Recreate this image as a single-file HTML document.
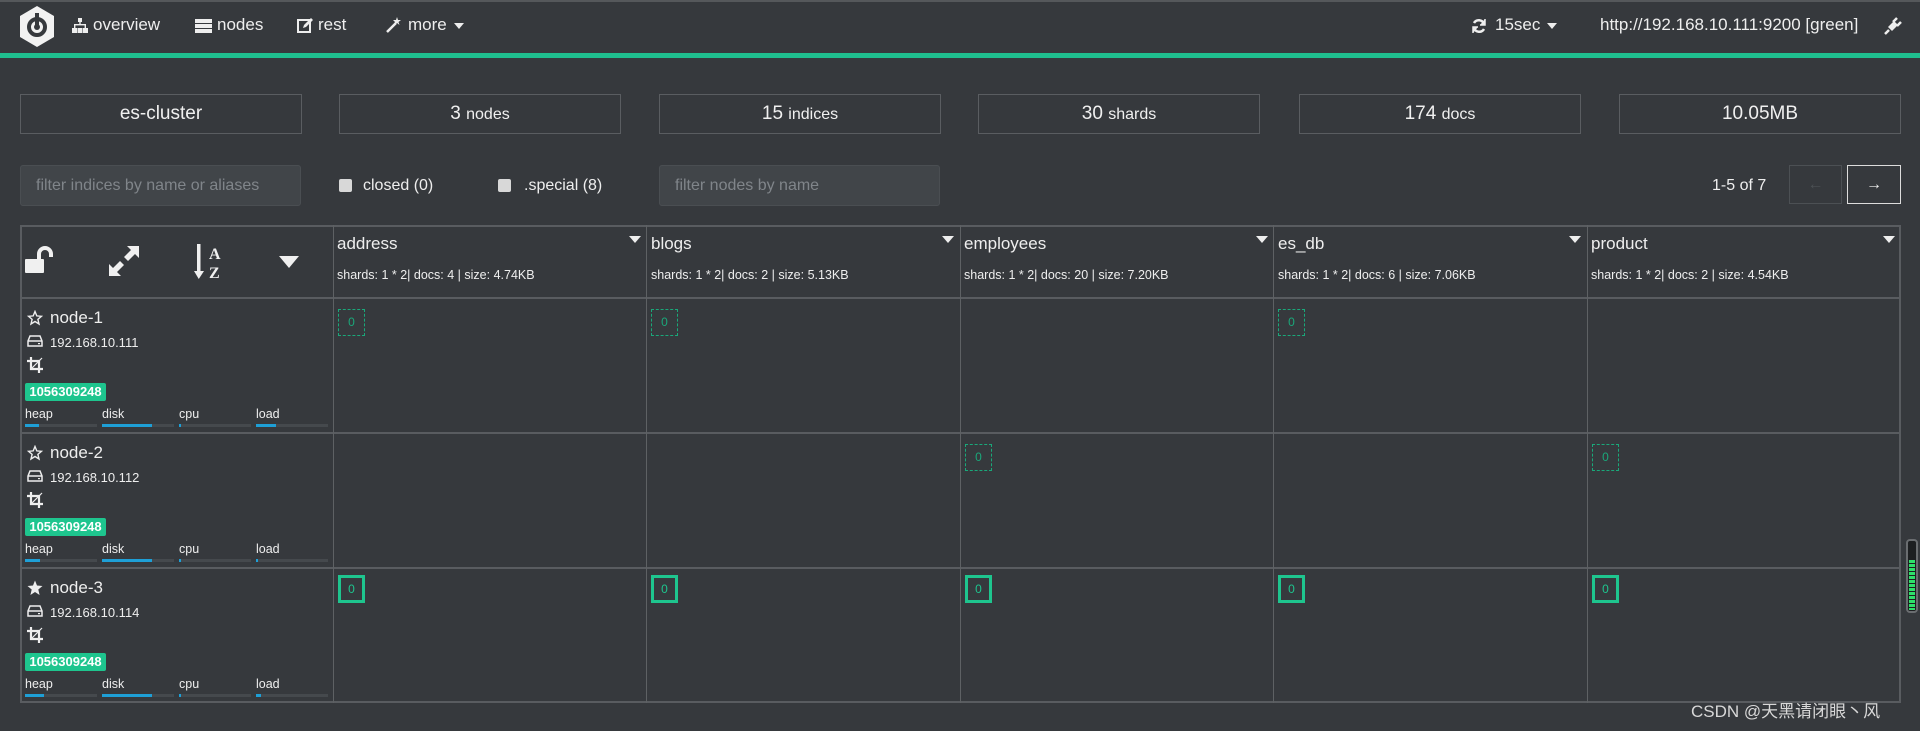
<!DOCTYPE html>
<html><head><meta charset="utf-8"><style>
*{box-sizing:border-box;margin:0;padding:0}
body{width:1920px;height:731px;background:#36393d;font-family:"Liberation Sans",Arial,sans-serif;color:#e8e8e8;position:relative;overflow:hidden}
.a{position:absolute}
.nav{top:0;left:0;width:1920px;height:53px;border-top:2px solid #55585b}
.ni{font-size:17px;color:#eee;top:15px;white-space:nowrap}
.green{top:53px;left:0;width:1920px;height:5px;background:#1fbf8f}
.stat{top:94px;height:40px;width:282px;border:1px solid #5a5d61;text-align:center;font-size:19px;line-height:38px;color:#f0f0f0}
.stat small{font-size:16px}
.inp{top:165px;height:41px;width:281px;background:#414549;border:1px solid #4a4e52;border-radius:3px;color:#80858a;font-size:16px;line-height:39px;padding-left:15px}
.cb{width:13px;height:13px;background:#d8d8d8;border-radius:2px;top:179px}
.lbl{font-size:16px;top:177px;color:#eee}
.vl{width:1px;background:#5e6164;top:225px;height:478px}
.hl{height:2px;background:#595c60;left:20px;width:1881px}
.iname{font-size:17px;color:#eee;top:234px}
.imeta{font-size:12.5px;color:#eee;top:268px;white-space:nowrap}
.car{width:0;height:0;border-left:6px solid transparent;border-right:6px solid transparent;border-top:7px solid #eee;top:236px}
.nn{font-size:17px;color:#eee}
.ip{font-size:13px;color:#eee}
.badge{background:#1ec58e;color:#fff;font-weight:bold;font-size:13px;width:81px;height:18px;line-height:18px;text-align:center;border-radius:2px}
.bl{font-size:12.5px;color:#eee}
.tr{height:3px;width:72px;background:#45494d}
.fl{height:3px;background:#1e9fd6;left:0;top:0;position:absolute}
.sh{width:27px;height:27px;border:1px dashed #1aa87a;color:#1aa87a;font-size:12px;text-align:center;line-height:25px}
.sp{width:27px;height:28px;border:3px solid #1ec58e;color:#1ec58e;font-size:12px;text-align:center;line-height:22px}
</style></head><body>
<div class="a nav"></div>
<svg class="a" style="left:18px;top:5px" width="38" height="43" viewBox="0 0 38 43"><path d="M19 1 L36 11 L36 32 L19 42 L2 32 L2 11 Z" fill="#f2f2f2"/><circle cx="19" cy="22" r="8" fill="none" stroke="#36393d" stroke-width="4"/><rect x="17" y="8" width="4" height="13" fill="#36393d"/><circle cx="19" cy="22" r="3" fill="#36393d"/></svg>
<svg class="a" style="left:72px;top:18px" width="16" height="15" viewBox="0 0 16 15" fill="#eee"><rect x="6" y="0" width="4" height="4"/><rect x="7.3" y="4" width="1.4" height="3"/><rect x="2" y="6" width="12" height="1.4"/><rect x="2" y="6" width="1.4" height="4"/><rect x="12.6" y="6" width="1.4" height="4"/><rect x="0" y="10" width="5" height="5"/><rect x="5.5" y="10" width="5" height="5"/><rect x="11" y="10" width="5" height="5"/></svg>
<div class="a ni" style="left:93px">overview</div>
<svg class="a" style="left:195px;top:19px" width="17" height="14" viewBox="0 0 17 14" fill="#eee"><rect y="0" width="17" height="4"/><rect y="5" width="17" height="4"/><rect y="10" width="17" height="4"/></svg>
<div class="a ni" style="left:217px">nodes</div>
<svg class="a" style="left:297px;top:18px" width="16" height="15" viewBox="0 0 16 15"><rect x="1" y="2" width="12" height="12" fill="none" stroke="#eee" stroke-width="2"/><path d="M6 10 L7 7 L14 0 L16 2 L9 9 Z" fill="#eee"/></svg>
<div class="a ni" style="left:318px">rest</div>
<svg class="a" style="left:386px;top:17px" width="16" height="16" viewBox="0 0 16 16"><path d="M1 15 L10 6" stroke="#eee" stroke-width="2.5"/><path d="M11 0 L12 3 L15 3 L12.5 5 L13.5 8 L11 6 L8 7.5 L9 5 L7 3 L10 3 Z" fill="#eee"/></svg>
<div class="a ni" style="left:408px">more</div>
<div class="a" style="left:454px;top:23px;border-left:5px solid transparent;border-right:5px solid transparent;border-top:6px solid #eee"></div>
<svg class="a" style="left:1471px;top:18px" width="16" height="16" viewBox="0 0 16 16" fill="none" stroke="#eee" stroke-width="2.5"><path d="M13 6 A5.5 5.5 0 0 0 3 5"/><path d="M3 10 A5.5 5.5 0 0 0 13 11"/><path d="M14 1 V7 H9" fill="#eee" stroke-width="1.5"/><path d="M2 15 V9 H7" fill="#eee" stroke-width="1.5"/></svg>
<div class="a ni" style="left:1495px">15sec</div>
<div class="a" style="left:1547px;top:23px;border-left:5px solid transparent;border-right:5px solid transparent;border-top:6px solid #eee"></div>
<div class="a ni" style="left:1600px">http://192.168.10.111:9200 [green]</div>
<svg class="a" style="left:1884px;top:17px" width="18" height="18" viewBox="0 0 18 18" fill="#eee"><path d="M1 17 L5 13" stroke="#eee" stroke-width="2.5"/><path d="M4 10 L10 4 L14 8 L8 14 Z"/><path d="M9 5 L13 1 M13 9 L17 5" stroke="#eee" stroke-width="2.5"/></svg>
<div class="a green"></div>

<div class="a stat" style="left:20px">es-cluster</div>
<div class="a stat" style="left:339px">3 <small>nodes</small></div>
<div class="a stat" style="left:659px">15 <small>indices</small></div>
<div class="a stat" style="left:978px">30 <small>shards</small></div>
<div class="a stat" style="left:1299px">174 <small>docs</small></div>
<div class="a stat" style="left:1619px">10.05MB</div>

<div class="a inp" style="left:20px">filter indices by name or aliases</div>
<div class="a cb" style="left:339px"></div><div class="a lbl" style="left:363px">closed (0)</div>
<div class="a cb" style="left:498px"></div><div class="a lbl" style="left:524px">.special (8)</div>
<div class="a inp" style="left:659px">filter nodes by name</div>
<div class="a lbl" style="left:1712px">1-5 of 7</div>
<div class="a" style="left:1789px;top:165px;width:53px;height:39px;border:1px solid #4c5054;color:#4c5054;text-align:center;line-height:37px;font-size:16px">←</div>
<div class="a" style="left:1847px;top:165px;width:54px;height:39px;border:1px solid #ddd;color:#eee;text-align:center;line-height:37px;font-size:16px">→</div>

<!-- table -->
<div class="a" style="left:20px;top:225px;width:1881px;height:478px;border:2px solid #595c60"></div>
<div class="a hl" style="top:297px"></div>
<div class="a hl" style="top:432px"></div>
<div class="a hl" style="top:567px"></div>
<div class="a vl" style="left:333px"></div>
<div class="a vl" style="left:646px"></div>
<div class="a vl" style="left:960px"></div>
<div class="a vl" style="left:1273px"></div>
<div class="a vl" style="left:1587px"></div>

<svg class="a" style="left:25px;top:246px" width="32" height="28" viewBox="0 0 32 28" fill="#f0f0f0"><rect x="0" y="13" width="19" height="14" rx="1"/><path d="M14 13 V8 A6 6 0 0 1 26 8 V11" fill="none" stroke="#f0f0f0" stroke-width="4"/></svg>
<svg class="a" style="left:109px;top:246px" width="30" height="30" viewBox="0 0 30 30" fill="#f0f0f0"><path d="M18 0 H30 V12 L26 8 L19 15 L15 11 L22 4 Z"/><path d="M12 30 H0 V18 L4 22 L11 15 L15 19 L8 26 Z"/></svg>
<svg class="a" style="left:194px;top:244px" width="34" height="36" viewBox="0 0 34 36" fill="#f0f0f0"><rect x="3" y="0" width="3.5" height="29"/><path d="M0 27 H10 L4.75 35 Z"/><text x="15" y="15" font-family="Liberation Serif,serif" font-weight="bold" font-size="16">A</text><text x="15" y="34" font-family="Liberation Serif,serif" font-weight="bold" font-size="16">Z</text></svg>
<div class="a" style="left:279px;top:256px;border-left:10px solid transparent;border-right:10px solid transparent;border-top:12px solid #f0f0f0"></div>

<div class="a iname" style="left:337px">address</div><div class="a imeta" style="left:337px">shards: 1 * 2| docs: 4 | size: 4.74KB</div><div class="a car" style="left:629px"></div>
<div class="a iname" style="left:651px">blogs</div><div class="a imeta" style="left:651px">shards: 1 * 2| docs: 2 | size: 5.13KB</div><div class="a car" style="left:942px"></div>
<div class="a iname" style="left:964px">employees</div><div class="a imeta" style="left:964px">shards: 1 * 2| docs: 20 | size: 7.20KB</div><div class="a car" style="left:1256px"></div>
<div class="a iname" style="left:1278px">es_db</div><div class="a imeta" style="left:1278px">shards: 1 * 2| docs: 6 | size: 7.06KB</div><div class="a car" style="left:1569px"></div>
<div class="a iname" style="left:1591px">product</div><div class="a imeta" style="left:1591px">shards: 1 * 2| docs: 2 | size: 4.54KB</div><div class="a car" style="left:1883px"></div>

<div id="nodes"></div>
<script>
var rows=[["node-1","192.168.10.111",[.2,.69,.03,.28],false],["node-2","192.168.10.112",[.21,.69,0.01,.01],false],["node-3","192.168.10.114",[.27,.69,.01,.07],true]];
var h="";
rows.forEach(function(r,i){var t=299+i*135;
var star=r[3]?'<path d="M8 0.5 L10 5.5 L15.5 6 L11.3 9.5 L12.6 15 L8 12 L3.4 15 L4.7 9.5 L0.5 6 L6 5.5 Z" fill="#eee"/>':'<path d="M8 1.5 L9.8 5.9 L14.5 6.3 L10.9 9.4 L12 14 L8 11.5 L4 14 L5.1 9.4 L1.5 6.3 L6.2 5.9 Z" fill="none" stroke="#eee" stroke-width="1.4"/>';
h+='<svg class="a" style="left:27px;top:'+(t+11)+'px" width="16" height="16" viewBox="0 0 16 16">'+star+'</svg>';
h+='<div class="a nn" style="left:50px;top:'+(t+9)+'px">'+r[0]+'</div>';
h+='<svg class="a" style="left:27px;top:'+(t+36)+'px" width="16" height="12" viewBox="0 0 16 12" fill="none" stroke="#eee" stroke-width="1.5"><path d="M1 6 L3 1 H13 L15 6 V11 H1 Z M1 6 H15"/><rect x="11" y="8" width="2" height="1.2" fill="#eee" stroke="none"/></svg>';
h+='<div class="a ip" style="left:50px;top:'+(t+36)+'px">'+r[1]+'</div>';
h+='<svg class="a" style="left:27px;top:'+(t+58)+'px" width="16" height="16" viewBox="0 0 16 16" fill="none" stroke="#eee" stroke-width="2.2"><path d="M4 0 V12 H16"/><path d="M0 4 H12 V16"/><path d="M15 1 L4 12" stroke-width="1.2"/></svg>';
h+='<div class="a badge" style="left:25px;top:'+(t+84)+'px">1056309248</div>';
var L=["heap","disk","cpu","load"];
L.forEach(function(l,j){var x=25+j*77;
h+='<div class="a bl" style="left:'+x+'px;top:'+(t+108)+'px">'+l+'</div>';
h+='<div class="a tr" style="left:'+x+'px;top:'+(t+125)+'px"><div class="fl" style="width:'+Math.max(2,r[2][j]*72)+'px"></div></div>';});
});
var cols=[333,646,960,1273,1587];
[[0,1,3],[2,4],[]].forEach(function(a,i){a.forEach(function(c){h+='<div class="a sh" style="left:'+(cols[c]+5)+'px;top:'+(309+i*135)+'px">0</div>';});});
cols.forEach(function(c){h+='<div class="a sp" style="left:'+(c+5)+'px;top:575px">0</div>';});
document.getElementById("nodes").innerHTML=h;
</script>

<div class="a" style="left:1906px;top:539px;width:12px;height:74px;border:2px solid #6a6d70;border-radius:4px;background:#1d1f21"></div>
<div class="a" style="left:1909px;top:560px;width:6px;height:50px;background:repeating-linear-gradient(#2ee06a 0 3px,#1d1f21 3px 4px)"></div>
<div class="a" style="left:1691px;top:697px;font-size:17px;color:#d8d8d8;font-family:'Liberation Sans','Noto Sans CJK SC',sans-serif">CSDN @天黑请闭眼丶风</div>
</body></html>
